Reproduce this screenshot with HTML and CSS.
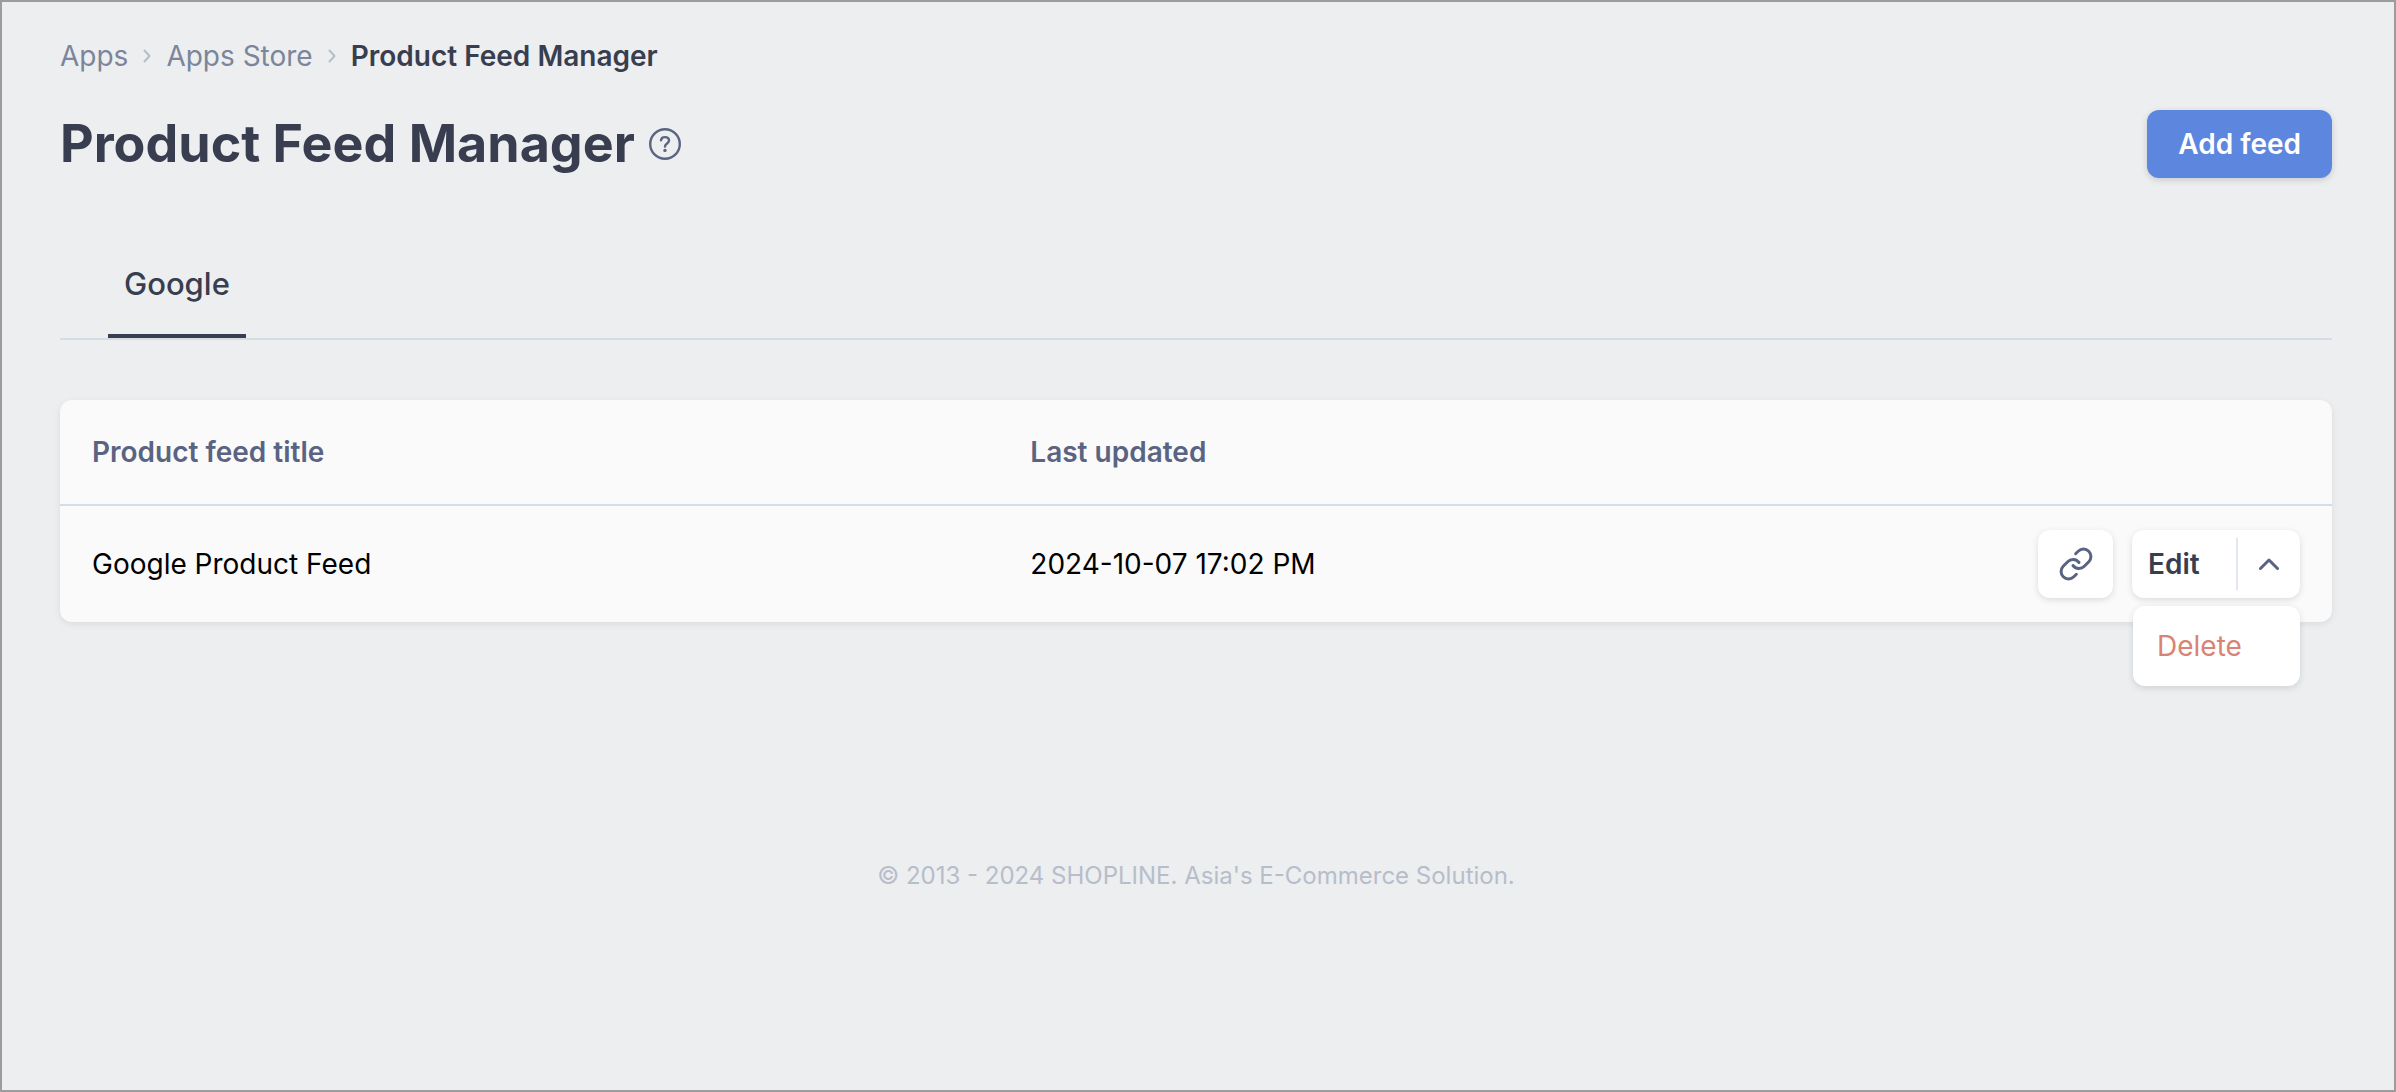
FILE: index.html
```html
<!DOCTYPE html>
<html lang="en">
<head>
    <meta charset="UTF-8">
    <meta name="viewport" content="width=device-width, initial-scale=1.0">
    <title>Product Feed Manager</title>
    <link rel="stylesheet" href="styles.css">
</head>
<body>

    <main class="page">
        <nav class="breadcrumb" aria-label="Breadcrumb">
            <a href="#">Apps</a>
            <svg class="crumb-arrow" viewBox="0 0 8 14"><path d="M1.5 1.5 6.5 7l-5 5.5"/></svg>
            <a href="#">Apps Store</a>
            <svg class="crumb-arrow" viewBox="0 0 8 14"><path d="M1.5 1.5 6.5 7l-5 5.5"/></svg>
            <span class="current">Product Feed Manager</span>
        </nav>

        <header>
            <h1>Product Feed Manager</h1>
            <button class="help-btn" aria-label="Help">
                <svg viewBox="0 0 32 32">
                    <circle cx="16" cy="16" r="14.8"/>
                    <path d="M12 12.400c.2-2.100 1.700-3.300 4-3.300s4 1.300 4 3.400c0 2.900-4 3-4 6"/>
                    <circle class="dot" cx="16" cy="22.400" r="1.700"/>
                </svg>
            </button>
            <button class="add-btn">Add feed</button>
        </header>

        <nav class="tabs">
            <a class="tab active" href="#">Google</a>
        </nav>

        <section class="card">
            <table>
                <thead>
                    <tr>
                        <th class="title-col">Product feed title</th>
                        <th>Last updated</th>
                        <th class="action-col"></th>
                    </tr>
                </thead>
                <tbody>
                    <tr>
                        <td>Google Product Feed</td>
                        <td>2024-10-07 17:02 PM</td>
                        <td class="action-col">
                            <div class="actions">
                                <button class="link-btn" aria-label="Copy link">
                                    <svg viewBox="0 0 24 24">
                                        <path d="M10 13a5 5 0 0 0 7.540.54l3-3a5 5 0 0 0-7.070-7.070l-1.720 1.710"/>
                                        <path d="M14 11a5 5 0 0 0-7.540-.54l-3 3a5 5 0 0 0 7.070 7.070l1.710-1.710"/>
                                    </svg>
                                </button>
                                <div class="split-btn">
                                    <button class="edit-btn">Edit</button>
                                    <button class="toggle-btn" aria-label="More actions" aria-expanded="true">
                                        <svg viewBox="0 0 20 12"><path d="M1.500 10.500 10 2l8.500 8.500"/></svg>
                                    </button>
                                    <div class="menu">
                                        <button class="delete-btn">Delete</button>
                                    </div>
                                </div>
                            </div>
                        </td>
                    </tr>
                </tbody>
            </table>
        </section>

        <footer>© 2013 - 2024 SHOPLINE. Asia's E-Commerce Solution.</footer>
    </main>

</body>
</html>
```

FILE: styles.css
```css
* {
    margin: 0;
    padding: 0;
    box-sizing: border-box;
}

body {
    font-family: Inter, "Liberation Sans", sans-serif;
    font-size: 28px;
    line-height: 40px;
    color: #383e4f;
    background-color: #eceeef;
}

.page {
    min-height: 100vh;
    padding: 34px 62px 40px 58px;
    border: 2px solid #9c9c9e;
}

a {
    color: inherit;
    text-decoration: none;
}

button {
    border: none;
    background: none;
    color: inherit;
    font: inherit;
    cursor: pointer;
}

svg {
    display: block;
    fill: none;
    stroke: #5a6482;
    stroke-linecap: round;
    stroke-linejoin: round;
}

/* Breadcrumb */
.breadcrumb {
    display: flex;
    align-items: center;
    gap: 15px;
    color: #7b859b;
}

.crumb-arrow {
    width: 8px;
    height: 14px;
    stroke: #b7bdcb;
    stroke-width: 2;
}

.current {
    color: #383e4f;
    font-weight: 600;
}

/* Page title */
header {
    display: flex;
    align-items: center;
    margin-top: 34px;
}

h1 {
    font-size: 52px;
    line-height: 68px;
    font-weight: 650;
}

.help-btn {
    margin-left: 14px;
}

.help-btn svg {
    width: 32px;
    height: 32px;
    stroke-width: 2.4;
}

.help-btn .dot {
    fill: #5a6482;
    stroke: none;
}

.add-btn {
    height: 68px;
    margin-left: auto;
    padding: 0 31px;
    border-radius: 12px;
    background-color: #5d86de;
    box-shadow: 0 2px 6px rgba(56, 62, 79, 0.2);
    color: white;
    font-weight: 600;
}

/* Tabs */
.tabs {
    display: flex;
    margin-top: 66px;
    padding-left: 48px;
    border-bottom: 2px solid #d5dce3;
}

.tab {
    padding: 20px 16px 30px;
    border-bottom: 4px solid transparent;
    font-size: 31px;
    font-weight: 500;
}

.tab.active {
    border-bottom-color: #383e4f;
}

/* Feed table */
.card {
    margin-top: 60px;
    border-radius: 12px;
    background-color: #fafafa;
    box-shadow: 0 2px 6px rgba(56, 62, 79, 0.1);
}

table {
    width: 100%;
    table-layout: fixed;
    border-collapse: collapse;
}

th,
td {
    padding: 24px 32px;
    text-align: left;
}

th {
    height: 105px;
    border-bottom: 2px solid #d3dee8;
    color: #5a6482;
    font-weight: 600;
}

td {
    color: black;
}

.title-col {
    width: 41.3%;
}

.action-col {
    width: 22%;
}

.actions {
    display: flex;
    justify-content: flex-end;
    gap: 19px;
}

.link-btn,
.split-btn,
.menu {
    border-radius: 12px;
    background-color: white;
    box-shadow: 0 2px 6px rgba(56, 62, 79, 0.16);
}

.link-btn {
    display: flex;
    align-items: center;
    justify-content: center;
    width: 75px;
    height: 68px;
}

.link-btn svg {
    width: 36px;
    height: 36px;
    stroke-width: 2;
}

.split-btn {
    position: relative;
    display: flex;
    align-items: center;
    width: 168px;
    height: 68px;
}

.edit-btn {
    flex: 1;
    padding-left: 16px;
    color: #383e4f;
    font-weight: 600;
    text-align: left;
}

.toggle-btn {
    display: flex;
    align-items: center;
    justify-content: center;
    width: 64px;
    height: 52px;
    border-left: 2px solid #e3e7ee;
}

.toggle-btn svg {
    width: 20px;
    height: 12px;
    stroke-width: 3;
}

.menu {
    position: absolute;
    top: 76px;
    right: 0;
    width: 167px;
}

.delete-btn {
    width: 100%;
    padding: 20px 24px;
    color: #d88373;
    text-align: left;
}

footer {
    margin-top: 234px;
    color: #b7bdcb;
    font-size: 24px;
    text-align: center;
}
```
